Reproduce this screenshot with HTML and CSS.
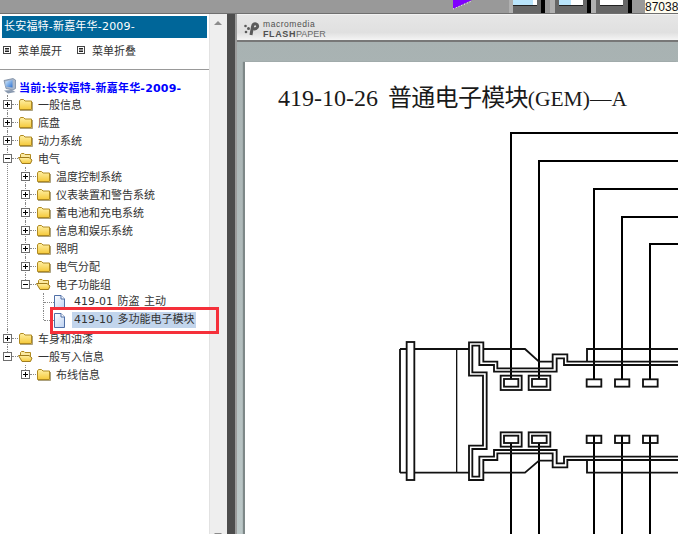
FILE: index.html
```html
<!DOCTYPE html>
<html lang="zh-CN">
<head>
    <meta charset="UTF-8">
    <meta name="viewport" content="width=device-width, initial-scale=1.0">
    <title>长安福特-新嘉年华-2009-</title>
    <link rel="stylesheet" href="styles.css">
</head>
<body>
    <svg class="icon-defs" width="0" height="0">
        <defs>
            <linearGradient id="folderFill" x1="0" y1="0" x2="0" y2="1">
                <stop offset="0" stop-color="#fff0a6"/>
                <stop offset="1" stop-color="#f5c93a"/>
            </linearGradient>
            <linearGradient id="docFill" x1="0" y1="0" x2="1" y2="1">
                <stop offset="0" stop-color="#ffffff"/>
                <stop offset="1" stop-color="#bcd2f2"/>
            </linearGradient>
            <linearGradient id="screenFill" x1="0" y1="0" x2="1" y2="1">
                <stop offset="0" stop-color="#d4ecff"/>
                <stop offset="1" stop-color="#2a70d0"/>
            </linearGradient>
            <symbol id="folder" viewBox="0 0 15 13">
                <path d="M1.5 3V11.5H13.5V3H7L5.5 1.5H2.5Z" fill="url(#folderFill)" stroke="#b08a20"/>
                <path d="M2 12.5H14.5V4" fill="none" stroke="#8a7a48" stroke-opacity=".7"/>
            </symbol>
            <symbol id="folder-open" viewBox="0 0 15 13">
                <path d="M2.5 5V2.5L3.5 1.5H6L7 2.5H12.5V11" fill="#fbe9a0" stroke="#b08a20"/>
                <path d="M.5 5.5H11L14 8 12.5 11.5H4Z" fill="url(#folderFill)" stroke="#a07c1c"/>
            </symbol>
            <symbol id="doc" viewBox="0 0 11 15">
                <path d="M.5.5H7L10.5 4V14.5H.5Z" fill="url(#docFill)" stroke="#4f6fa6"/>
                <path d="M7 .5V4H10.5" fill="#fff" stroke="#4f6fa6"/>
            </symbol>
            <symbol id="menu" viewBox="0 0 8 8">
                <rect x=".5" y=".5" width="7" height="7" fill="#fff" stroke="#444"/>
                <path d="M2 2.5H6M2 4H6M2 5.5H6" stroke="#222"/>
            </symbol>
        </defs>
    </svg>

    <div class="top-bar">
        <svg class="play-mark" width="20" height="10" viewBox="0 0 20 10">
            <path d="M0 0H19L0 9Z" fill="#8000ff"/>
            <path d="M0 9L19 1" stroke="#fff" stroke-dasharray="1 2" fill="none"/>
        </svg>
        <div class="thumb thumb-first">
            <span class="pane pane-blue wide"></span><span class="pane pane-white tiny"></span>
        </div>
        <div class="thumb thumb-second">
            <span class="pane pane-blue half"></span><span class="pane pane-white half"></span>
        </div>
        <div class="thumb thumb-third">
            <span class="pane pane-white full"></span>
        </div>
        <div class="counter">87038</div>
    </div>

    <div class="main">
        <div class="sidebar">
            <div class="side-title">长安福特-新嘉年华-2009-</div>
            <div class="side-menu">
                <div class="menu-link"><svg class="menu-icon"><use href="#menu"/></svg>菜单展开</div>
                <div class="menu-link"><svg class="menu-icon"><use href="#menu"/></svg>菜单折叠</div>
            </div>
            <div class="tree-root">
                <svg class="pc-icon" viewBox="0 0 13 16">
                    <path d="M1 2.5L10 .5 12.5 2V10.5L10 12 3 10.5Z" fill="#aab8cc" stroke="#6d7f98" stroke-width=".7"/>
                    <path d="M2.5 3.5L9.5 2V9.5L2.5 8.5Z" fill="url(#screenFill)"/>
                    <path d="M1 12.5L9 12 12.5 14 5 15.5Z" fill="#8a9ab0"/>
                </svg>
                <span>当前:长安福特-新嘉年华-2009-</span>
            </div>
            <ul class="tree">
                <li><div class="row"><span class="toggle plus"></span><span class="twig"></span><svg class="folder"><use href="#folder"/></svg><span class="label">一般信息</span></div></li>
                <li><div class="row"><span class="toggle plus"></span><span class="twig"></span><svg class="folder"><use href="#folder"/></svg><span class="label">底盘</span></div></li>
                <li><div class="row"><span class="toggle plus"></span><span class="twig"></span><svg class="folder"><use href="#folder"/></svg><span class="label">动力系统</span></div></li>
                <li>
                    <div class="row"><span class="toggle"></span><span class="twig"></span><svg class="folder"><use href="#folder-open"/></svg><span class="label">电气</span></div>
                    <ul>
                        <li><div class="row"><span class="toggle plus"></span><span class="twig"></span><svg class="folder"><use href="#folder"/></svg><span class="label">温度控制系统</span></div></li>
                        <li><div class="row"><span class="toggle plus"></span><span class="twig"></span><svg class="folder"><use href="#folder"/></svg><span class="label">仪表装置和警告系统</span></div></li>
                        <li><div class="row"><span class="toggle plus"></span><span class="twig"></span><svg class="folder"><use href="#folder"/></svg><span class="label">蓄电池和充电系统</span></div></li>
                        <li><div class="row"><span class="toggle plus"></span><span class="twig"></span><svg class="folder"><use href="#folder"/></svg><span class="label">信息和娱乐系统</span></div></li>
                        <li><div class="row"><span class="toggle plus"></span><span class="twig"></span><svg class="folder"><use href="#folder"/></svg><span class="label">照明</span></div></li>
                        <li><div class="row"><span class="toggle plus"></span><span class="twig"></span><svg class="folder"><use href="#folder"/></svg><span class="label">电气分配</span></div></li>
                        <li>
                            <div class="row"><span class="toggle"></span><span class="twig"></span><svg class="folder"><use href="#folder-open"/></svg><span class="label">电子功能组</span></div>
                            <ul>
                                <li><div class="row"><span class="twig leaf-twig"></span><svg class="doc"><use href="#doc"/></svg><span class="label leaf-label">419-01 防盗 主动</span></div></li>
                                <li><div class="row"><span class="twig leaf-twig"></span><svg class="doc"><use href="#doc"/></svg><span class="label leaf-label selected">419-10 多功能电子模块</span></div></li>
                            </ul>
                        </li>
                    </ul>
                </li>
                <li><div class="row"><span class="toggle plus"></span><span class="twig"></span><svg class="folder"><use href="#folder"/></svg><span class="label">车身和油漆</span></div></li>
                <li>
                    <div class="row"><span class="toggle"></span><span class="twig"></span><svg class="folder"><use href="#folder-open"/></svg><span class="label">一般写入信息</span></div>
                    <ul>
                        <li><div class="row"><span class="toggle plus"></span><span class="twig"></span><svg class="folder"><use href="#folder"/></svg><span class="label">布线信息</span></div></li>
                    </ul>
                </li>
            </ul>
            <div class="red-mark"></div>
        </div>

        <div class="scrollbar">
            <span class="arrow-up"></span>
            <span class="arrow-down"></span>
        </div>
        <div class="splitter"></div>

        <div class="viewer">
            <div class="viewer-head">
                <svg class="fp-logo" width="16" height="15" viewBox="0 0 16 15">
                    <path d="M7 14L8.5 5.5C9 3 10.5 2.5 12 3 14 3.5 14.5 6.5 12 7.5 11 8 10 8 9 7.5" fill="none" stroke="#5a5a5a" stroke-width="3"/>
                    <circle cx="1.5" cy="5" r="1.3" fill="#5a5a5a"/>
                    <circle cx="4.5" cy="7.5" r="1.5" fill="#5a5a5a"/>
                    <circle cx="2" cy="11" r="1.3" fill="#5a5a5a"/>
                </svg>
                <div class="fp-brand">
                    <div class="fp-macro">macromedia</div>
                    <div class="fp-name"><b>FLASH</b>PAPER</div>
                </div>
            </div>
            <div class="viewer-body">
                <div class="paper">
                    <h1 class="doc-title">419-10-26 <span class="title-cjk">普通电子模块</span><span class="title-code">(GEM)—A</span></h1>
                    <svg class="schematic" width="433" height="414" viewBox="245 120 433 414">
                        <g class="wire">
                            <path d="M678 133H511V379"/>
                            <path d="M678 161H539V379"/>
                            <path d="M678 189H594V379"/>
                            <path d="M678 217H622V379"/>
                            <path d="M678 244H650V379"/>
                            <path d="M511 443V534M539 443V534M594 436V534M622 436V534M650 436V534"/>
                        </g>
                        <!-- connector, traced at 3x -->
                        <g class="conn" transform="translate(390 330) scale(.33333)">
                            <path d="M30 57V428M30 57H50M30 428H50M73 57H237M73 428H237"/>
                            <path class="thin" d="M200 57V428"/>
                            <rect x="50" y="36" width="23" height="414"/>
                            <path d="M280 57H405L447 95H488M280 428H405L447 392H488M591 95V57H864M591 392V428H864"/>
                            <path d="M864 95H532V73H488V115H322V95H280V37H237V137H279V347H237V450H280V390H322V370H488V412H532V390H864"/>
                            <path d="M864 105H522V85H500V125H312V105H268V47H247V127H290V357H247V440H268V380H312V360H500V400H522V380H864"/>
                            <rect x="332" y="137" width="63" height="43"/>
                            <rect x="342" y="147" width="43" height="23"/>
                            <rect x="416" y="137" width="65" height="43"/>
                            <rect x="426" y="147" width="44" height="23"/>
                            <rect x="590" y="148" width="44" height="22"/>
                            <rect x="675" y="148" width="43" height="22"/>
                            <rect x="759" y="148" width="44" height="22"/>
                            <rect x="332" y="307" width="63" height="43"/>
                            <rect x="342" y="317" width="43" height="22"/>
                            <rect x="416" y="307" width="65" height="43"/>
                            <rect x="426" y="317" width="44" height="22"/>
                            <rect x="590" y="317" width="44" height="22"/>
                            <rect x="675" y="317" width="43" height="22"/>
                            <rect x="759" y="317" width="44" height="22"/>
                        </g>
                    </svg>
                </div>
            </div>
        </div>
    </div>
</body>
</html>
```

FILE: styles.css
```css
* {
    box-sizing: border-box;
}

html, body {
    margin: 0;
    height: 100%;
}

body {
    width: 678px;
    height: 534px;
    overflow: hidden;
    display: flex;
    flex-direction: column;
    font-family: 'DejaVu Sans', 'Noto Sans CJK SC', sans-serif;
    font-size: 11px;
    color: #333333;
    background: #FFFFFF;
}

.icon-defs {
    position: absolute;
}

/* top strip, cut off by the screenshot */
.top-bar {
    height: 14px;
    flex: none;
    display: flex;
    background: #999999;
    border-bottom: 1px solid #6f6f6f;
    padding-left: 453px;
    overflow: hidden;
}

.play-mark {
    flex: none;
    margin-right: 36px;
}

.thumb {
    display: flex;
    align-items: flex-start;
    height: 13px;
    background: #666666;
    border-left: 4px solid #b0b0b0;
    border-right: 4px solid #000000;
}

.thumb-first {
    padding-right: 4px;
    margin-right: 5px;
}

.thumb-second {
    border-left-width: 5px;
    padding: 0 4px;
}

.thumb-third {
    border-left-width: 5px;
    padding: 0 5px 0 4px;
}

.pane {
    height: 6px;
    border-bottom: 1px solid #222222;
}

.pane-blue {
    background: #B9E4FB;
}

.pane-white {
    background: #FFFFFF;
}

.wide { width: 20px; }
.tiny { width: 4px; }
.half { width: 12px; }
.full { width: 23px; }

.counter {
    margin-left: 13px;
    flex: 1;
    background: #FFFDF0;
    color: #111111;
    font-family: 'Liberation Sans', sans-serif;
    font-size: 12px;
    line-height: 14px;
    overflow: hidden;
}

.main {
    flex: 1;
    display: flex;
    position: relative;
    min-height: 0;
}

/* left tree panel */
.sidebar {
    width: 209px;
    flex: none;
    padding-top: 2px;
    background: #FFFFFF;
}

.side-title {
    height: 22px;
    margin: 0 2px;
    padding-left: 2px;
    background: #006699;
    color: #FFFFFF;
    line-height: 22px;
    letter-spacing: .2px;
    white-space: nowrap;
}

.side-menu {
    display: flex;
    align-items: flex-start;
    height: 32px;
    padding: 2px 0 0 3px;
    border-bottom: 1px solid #999999;
}

.menu-link {
    display: flex;
    align-items: center;
    width: 74px;
    height: 20px;
    color: #333333;
}

.menu-icon {
    width: 8px;
    height: 8px;
    margin-right: 7px;
}

.tree-root {
    display: flex;
    align-items: center;
    height: 18px;
    margin-top: 7px;
    padding: 2px 0 0 3px;
    color: #0000FF;
    font-weight: bold;
    letter-spacing: .2px;
    white-space: nowrap;
}

.pc-icon {
    width: 13px;
    height: 16px;
    margin: -3px 3px 0 0;
    flex: none;
}

.tree, .tree ul {
    list-style: none;
    margin: 0;
    padding: 0;
}

.tree {
    padding-left: 3px;
}

.tree ul {
    padding-left: 18px;
}

.tree li {
    position: relative;
}

.tree li::before {
    content: "";
    position: absolute;
    left: 4px;
    top: 0;
    bottom: 0;
    border-left: 1px dotted #888888;
}

.tree li:last-child::before {
    bottom: auto;
    height: 9px;
}

.row {
    position: relative;
    display: flex;
    align-items: center;
    height: 18px;
    white-space: nowrap;
}

.toggle {
    position: relative;
    flex: none;
    width: 9px;
    height: 9px;
    border: 1px solid #6e6e6e;
    background: #FFFFFF;
}

.toggle::before {
    content: "";
    position: absolute;
    left: 1px;
    top: 3px;
    width: 5px;
    height: 1px;
    background: #000000;
}

.toggle.plus::after {
    content: "";
    position: absolute;
    left: 3px;
    top: 1px;
    width: 1px;
    height: 5px;
    background: #000000;
}

.twig {
    flex: none;
    width: 6px;
    border-top: 1px dotted #888888;
}

.leaf-twig {
    width: 10px;
    margin-left: 5px;
}

.folder {
    flex: none;
    width: 15px;
    height: 13px;
}

.doc {
    flex: none;
    width: 11px;
    height: 15px;
}

.label {
    margin-left: 5px;
    color: #333333;
}

.leaf-label {
    margin-left: 7px;
    padding: 0 2px;
    height: 16px;
    line-height: 16px;
    word-spacing: 1px;
}

.selected {
    background: #C2D5EC;
}

.red-mark {
    position: absolute;
    left: 50px;
    top: 293px;
    width: 169px;
    height: 27px;
    border: 3px solid #F5303A;
}

.scrollbar {
    width: 18px;
    flex: none;
    display: flex;
    flex-direction: column;
    justify-content: space-between;
    align-items: center;
    padding: 7px 1px 0 0;
    margin-bottom: -3px;
    background: #EEEEEE;
    border-left: 1px solid #E2E2E2;
}

.arrow-up {
    border-left: 4px solid transparent;
    border-right: 4px solid transparent;
    border-bottom: 4px solid #8C8C8C;
}

.arrow-down {
    border-left: 4px solid transparent;
    border-right: 4px solid transparent;
    border-top: 4px solid #8C8C8C;
}

.splitter {
    width: 8px;
    flex: none;
    background: #4D4D4D;
}

/* document viewer */
.viewer {
    flex: 1;
    min-width: 0;
    display: flex;
    flex-direction: column;
    border-left: 2px solid #9C9C9C;
}

.viewer-head {
    display: flex;
    align-items: center;
    height: 28px;
    flex: none;
    padding: 2px 0 0 7px;
    background: linear-gradient(#E6E6E6, #E0E0E0 70%, #F4F4F4);
    border-top: 1px solid #F2F2F2;
    border-bottom: 2px solid #777777;
}

.fp-logo {
    flex: none;
    margin-right: 3px;
}

.fp-brand {
    font-family: 'Liberation Sans', sans-serif;
    color: #505050;
}

.fp-macro {
    font-size: 8.5px;
    line-height: 10px;
    letter-spacing: .55px;
}

.fp-name {
    font-size: 9px;
    line-height: 10px;
    color: #6A6A6A;
}

.fp-name b {
    color: #505050;
    letter-spacing: .6px;
}

.viewer-body {
    flex: 1;
    min-height: 0;
    overflow: hidden;
    padding: 20px 0 0 8px;
    background: linear-gradient(#A8B2B2, #BCC8C8);
}

.paper {
    height: 500px;
    background: #FFFFFF;
    box-shadow: -2px 0 1px #7E8888;
}

.doc-title {
    margin: 0;
    height: 58px;
    padding: 19px 0 0 33px;
    font-family: 'Liberation Serif', 'Noto Sans CJK SC', serif;
    font-size: 24px;
    line-height: 34px;
    font-weight: normal;
    word-spacing: 4px;
    color: #1A1A1A;
    white-space: nowrap;
}

.title-cjk {
    letter-spacing: -.7px;
}

.title-code {
    font-size: 21.5px;
}

.schematic {
    display: block;
}

.wire path {
    fill: none;
    stroke: #000000;
    stroke-width: 2;
}

.conn path, .conn rect {
    fill: none;
    stroke: #111111;
    stroke-width: 5.5;
}

.conn .thin {
    stroke-width: 4;
}
```
